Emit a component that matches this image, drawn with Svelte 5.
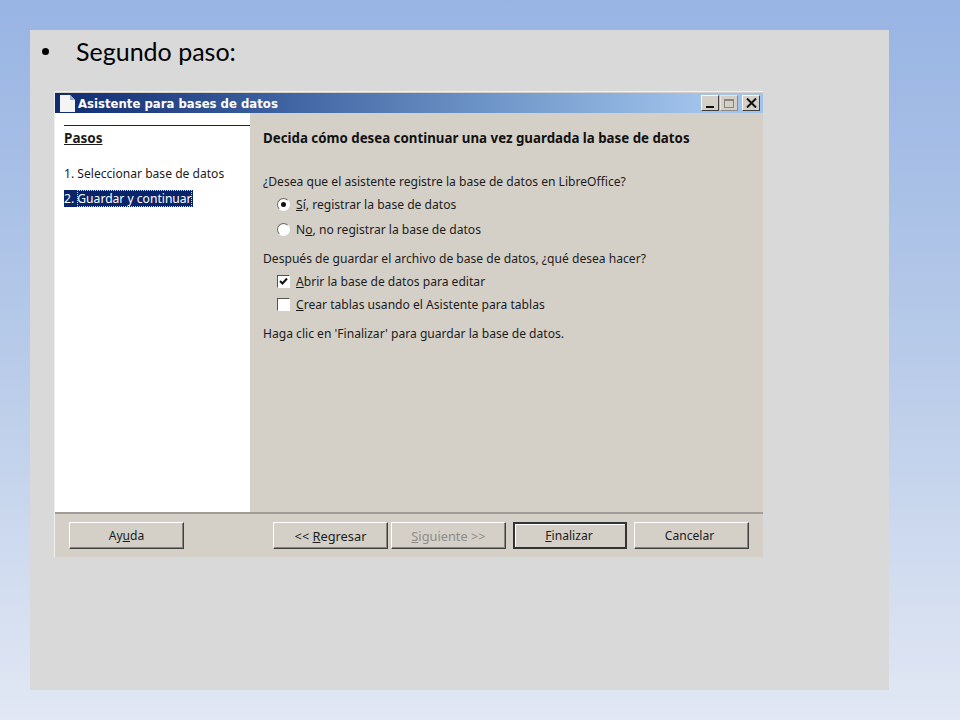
<script>
	const steps = ['1. Seleccionar base de datos'];
</script>

<div class="slide">
	<div class="panel">
		<div class="bullet-row">
			<span class="bullet"></span>
			<h1>Segundo paso:</h1>
		</div>

		<div class="dialog">
			<div class="titlebar">
				<svg class="doc-icon" width="17" height="18" viewBox="0 0 17 18">
					<path d="M1 1h10l5 5v12H1z" fill="#f4f4f2" />
					<path d="M11 1l5 5h-5z" fill="#9fb0c4" />
				</svg>
				<span class="title">Asistente para bases de datos</span>
				<div class="winbtns">
					<button class="winbtn" aria-label="Minimizar"><i class="min"></i></button>
					<button class="winbtn off" aria-label="Maximizar"><i class="max"></i></button>
					<button class="winbtn" aria-label="Cerrar">
						<svg width="11" height="10" viewBox="0 0 11 10">
							<path d="M1 0.5l9 9M10 0.5l-9 9" stroke="#111" stroke-width="2" fill="none" />
						</svg>
					</button>
				</div>
			</div>

			<div class="body">
				<aside class="steps">
					<div class="steps-title">Pasos</div>
					{#each steps as step}
						<div class="step">{step}</div>
					{/each}
					<div class="step"><span class="current">2. <span class="dotted">Guardar y continuar</span></span></div>
				</aside>

				<section class="content">
					<h2>Decida cómo desea continuar una vez guardada la base de datos</h2>

					<p class="q1">¿Desea que el asistente registre la base de datos en LibreOffice?</p>
					<label class="opt first">
						<span class="radio checked"></span>
						<span><u>S</u>í, registrar la base de datos</span>
					</label>
					<label class="opt second">
						<span class="radio"></span>
						<span>N<u>o</u>, no registrar la base de datos</span>
					</label>

					<p class="q2">Después de guardar el archivo de base de datos, ¿qué desea hacer?</p>
					<label class="opt first-check">
						<span class="check">
							<svg width="11" height="11" viewBox="0 0 11 11">
								<path d="M2 5l2.5 2.5L9 2.5" stroke="#111" stroke-width="2" fill="none" />
							</svg>
						</span>
						<span><u>A</u>brir la base de datos para editar</span>
					</label>
					<label class="opt second-check">
						<span class="check"></span>
						<span><u>C</u>rear tablas usando el Asistente para tablas</span>
					</label>

					<p class="q3">Haga clic en 'Finalizar' para guardar la base de datos.</p>
				</section>
			</div>

			<div class="footer">
				<button class="btn">Ay<u>u</u>da</button>
				<div class="footer-right">
					<div class="nav-pair">
						<button class="btn">&lt;&lt; <u>R</u>egresar</button>
						<button class="btn disabled"><u>S</u>iguiente &gt;&gt;</button>
					</div>
					<button class="btn default"><u>F</u>inalizar</button>
					<button class="btn cancel">Cancelar</button>
				</div>
			</div>
		</div>
	</div>
</div>

<style>
	:global(body) {
		margin: 0;
	}
	.slide {
		box-sizing: border-box;
		width: 960px;
		height: 720px;
		padding: 30px 71px 30px 30px;
		background: linear-gradient(180deg, #98b4e3 0%, #b8cbe9 50%, #e2e8f4 100%);
		overflow: hidden;
	}
	.panel {
		box-sizing: border-box;
		height: 660px;
		padding: 6px 0 0 24px;
		background: #d9d9d9;
		color: #000;
	}
	.bullet-row {
		display: flex;
		align-items: center;
		height: 30px;
		margin-bottom: 25px;
	}
	.bullet {
		width: 7px;
		height: 7px;
		margin-left: -12px;
		border-radius: 50%;
		background: #000;
	}
	h1 {
		margin: 0 0 0 27px;
		font: 400 25px 'Lato', sans-serif;
	}
	.dialog {
		box-sizing: border-box;
		display: flex;
		flex-direction: column;
		width: 709px;
		height: 466px;
		padding: 2px 0 0 1px;
		background: #d4d0c8;
		box-shadow: inset 1px 1px 0 #f0f0ee;
		font-family: 'Noto Sans', sans-serif;
		font-size: 12.1px;
		color: #1c1c1c;
	}
	.titlebar {
		display: flex;
		align-items: center;
		height: 20px;
		padding: 0 3px 0 4px;
		background: linear-gradient(90deg, #0f2b70 0%, #3b5f9e 30%, #7198ca 63%, #a2c4ec 92%);
		color: #fff;
	}
	.doc-icon {
		margin-right: 2px;
	}
	.title {
		flex: 1;
		font: 700 13px 'DejaVu Sans', sans-serif;
		font-stretch: condensed;
	}
	.winbtns {
		display: flex;
	}
	.winbtn {
		display: flex;
		align-items: center;
		justify-content: center;
		box-sizing: border-box;
		width: 18px;
		height: 16px;
		margin: 0 0 0 1px;
		padding: 0;
		background: #d4d0c8;
		border: 1px solid;
		border-color: #fff #404040 #404040 #fff;
	}
	.winbtn.off {
		margin-right: 3px;
		border-color: #e8e6e0 #8a8a8a #8a8a8a #e8e6e0;
	}
	.min {
		align-self: flex-end;
		width: 8px;
		height: 2px;
		margin-bottom: 2px;
		background: #111;
	}
	.max {
		box-sizing: border-box;
		width: 10px;
		height: 9px;
		border: 1px solid #88857e;
		border-top-width: 2px;
	}
	.body {
		display: flex;
		height: 401px;
		border-bottom: 2px solid #a09d96;
		box-sizing: border-box;
	}
	.steps {
		box-sizing: border-box;
		width: 195px;
		padding: 12px 0 0 9px;
		background: #fff;
		background-image: linear-gradient(#222, #222);
		background-repeat: no-repeat;
		background-size: 100% 1px;
		background-position: 9px 12px;
	}
	.steps-title {
		margin: 5px 0 19px;
		font-weight: 700;
		font-size: 13.5px;
		line-height: 16px;
		text-decoration: underline;
	}
	.step {
		height: 25px;
		line-height: 17px;
	}
	.current {
		display: inline-block;
		padding-right: 1px;
		background: #0a246a;
		color: #fff;
	}
	.dotted {
		outline: 1px dotted #d4d0c8;
		outline-offset: -1px;
	}
	.content {
		flex: 1;
		padding: 17px 0 0 13px;
	}
	h2 {
		margin: 0;
		font-size: 13.3px;
		font-weight: 700;
		line-height: 17px;
		color: #111;
	}
	p {
		margin: 0;
		line-height: 17px;
	}
	.q1 {
		margin-top: 26px;
	}
	.q2 {
		margin-top: 12px;
	}
	.q3 {
		margin-top: 12px;
	}
	.opt {
		display: flex;
		align-items: center;
		height: 17px;
		margin-left: 14px;
		gap: 6px;
	}
	.first {
		margin-top: 6px;
	}
	.second {
		margin-top: 8px;
	}
	.first-check {
		margin-top: 6px;
	}
	.second-check {
		margin-top: 6px;
	}
	.radio {
		box-sizing: border-box;
		display: flex;
		align-items: center;
		justify-content: center;
		width: 13px;
		height: 13px;
		border-radius: 50%;
		background: #fff;
		border: 1px solid;
		border-color: #6a6862 #fff #fff #6a6862;
	}
	.radio.checked::after {
		content: '';
		width: 5px;
		height: 5px;
		border-radius: 50%;
		background: #111;
	}
	.check {
		box-sizing: border-box;
		display: flex;
		align-items: center;
		justify-content: center;
		width: 13px;
		height: 13px;
		background: #fff;
		border: 1px solid;
		border-color: #55534e #fff #fff #55534e;
	}
	.footer {
		display: flex;
		justify-content: space-between;
		padding: 8px 14px 0 14px;
	}
	.footer-right {
		display: flex;
		gap: 7px;
	}
	.nav-pair {
		display: flex;
		gap: 3px;
	}
	.btn {
		box-sizing: border-box;
		width: 115px;
		height: 27px;
		padding: 0;
		background: #d4d0c8;
		border: 1px solid;
		border-color: #fff #404040 #404040 #fff;
		box-shadow: inset -1px -1px 0 #88857e;
		font: inherit;
		color: #1c1c1c;
	}
	.nav-pair .btn {
		font-size: 12.8px;
	}
	.btn.cancel {
		padding-right: 4px;
	}
	.btn.disabled {
		color: #8f8c85;
	}
	.btn.default {
		width: 114px;
		padding-right: 2px;
		border: 2px solid #333;
		box-shadow: inset 1px 1px 0 #fff;
	}
</style>
